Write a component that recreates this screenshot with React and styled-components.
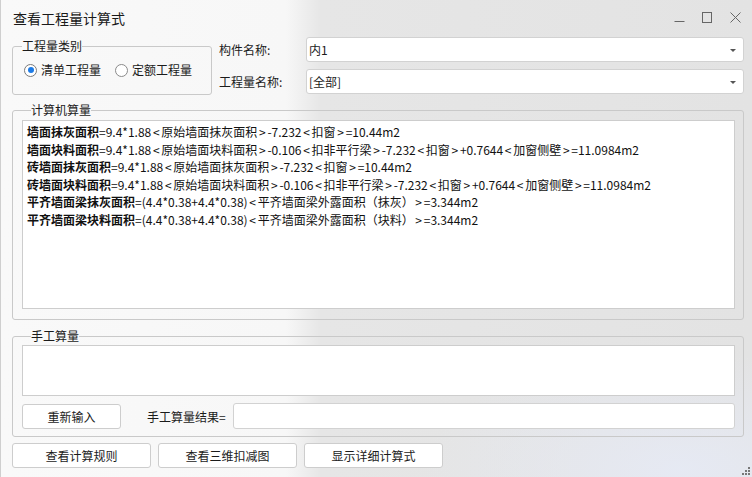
import React from 'react'
import styled, { createGlobalStyle } from 'styled-components'

const GlobalStyle = createGlobalStyle`
  html, body {
    margin: 0;
    padding: 0;
  }
  body {
    font-family: "Noto Sans CJK SC", "Noto Sans", sans-serif;
    font-size: 12px;
    color: #1b1b1b;
  }
`

const lines = [
  { label: '墙面抹灰面积', expr: '=9.4*1.88<原始墙面抹灰面积>-7.232<扣窗>=10.44m2' },
  { label: '墙面块料面积', expr: '=9.4*1.88<原始墙面块料面积>-0.106<扣非平行梁>-7.232<扣窗>+0.7644<加窗侧壁>=11.0984m2' },
  { label: '砖墙面抹灰面积', expr: '=9.4*1.88<原始墙面抹灰面积>-7.232<扣窗>=10.44m2' },
  { label: '砖墙面块料面积', expr: '=9.4*1.88<原始墙面块料面积>-0.106<扣非平行梁>-7.232<扣窗>+0.7644<加窗侧壁>=11.0984m2' },
  { label: '平齐墙面梁抹灰面积', expr: '=(4.4*0.38+4.4*0.38)<平齐墙面梁外露面积（抹灰）>=3.344m2' },
  { label: '平齐墙面梁块料面积', expr: '=(4.4*0.38+4.4*0.38)<平齐墙面梁外露面积（块料）>=3.344m2' },
]

// angle brackets are wider in the original font, give them room
const renderExpr = (expr) =>
  expr.split(/([<>])/).map((part, i) =>
    part === '<' || part === '>' ? <Bracket key={i}>{part}</Bracket> : part
  )

function App() {
  return (
    <>
      <GlobalStyle />
      <Window>
        <TitleBar>
          <Title>查看工程量计算式</Title>
          <Controls>
            <svg width="11" height="11" viewBox="0 0 11 11">
              <path d="M0.5 9.5 H10.5" stroke="#666" strokeWidth="1" />
            </svg>
            <svg width="11" height="11" viewBox="0 0 11 11">
              <rect x="0.5" y="0.5" width="9" height="10" fill="none" stroke="#666" strokeWidth="1" />
            </svg>
            <svg width="11" height="11" viewBox="0 0 11 11">
              <path d="M0.5 0.5 L10.5 10.5 M10.5 0.5 L0.5 10.5" stroke="#666" strokeWidth="1" />
            </svg>
          </Controls>
        </TitleBar>

        <TopRow>
          <TypeGroup>
            <Legend>工程量类别</Legend>
            <RadioRow>
              <RadioItem>
                <Radio checked />
                清单工程量
              </RadioItem>
              <RadioItem>
                <Radio />
                定额工程量
              </RadioItem>
            </RadioRow>
          </TypeGroup>
          <FormArea>
            <FormRow>
              <FieldLabel>构件名称:</FieldLabel>
              <Combo>
                <span>内1</span>
                <Arrow />
              </Combo>
            </FormRow>
            <FormRow>
              <FieldLabel>工程量名称:</FieldLabel>
              <Combo>
                <span>[全部]</span>
                <Arrow />
              </Combo>
            </FormRow>
          </FormArea>
        </TopRow>

        <CalcGroup>
          <Legend>计算机算量</Legend>
          <ResultBox>
            {lines.map((l, i) => (
              <Line key={i}>
                <b>{l.label}</b>
                {renderExpr(l.expr)}
              </Line>
            ))}
          </ResultBox>
        </CalcGroup>

        <ManualGroup>
          <Legend>手工算量</Legend>
          <ManualArea />
          <ManualRow>
            <Button $width={99}>重新输入</Button>
            <ResultLabel>手工算量结果=</ResultLabel>
            <ResultInput />
          </ManualRow>
        </ManualGroup>

        <BottomRow>
          <Button $width={139}>查看计算规则</Button>
          <Button $width={139}>查看三维扣减图</Button>
          <Button $width={139}>显示详细计算式</Button>
        </BottomRow>

        <Grip width="9" height="9" viewBox="0 0 9 9">
          <rect x="6" y="0" width="2" height="2" fill="#777" />
          <rect x="3" y="3" width="2" height="2" fill="#777" />
          <rect x="6" y="3" width="2" height="2" fill="#777" />
          <rect x="0" y="6" width="2" height="2" fill="#777" />
          <rect x="3" y="6" width="2" height="2" fill="#777" />
          <rect x="6" y="6" width="2" height="2" fill="#777" />
        </Grip>
      </Window>
    </>
  )
}

export default App

const Window = styled.div`
position: relative;
width: 752px;
height: 477px;
box-sizing: border-box;
overflow: hidden;
border-left: 1px solid #cfcfcf;
display: flex;
flex-direction: column;
background:
  radial-gradient(ellipse 260px 120px at 680px 470px, rgba(230, 234, 245, 0.9), rgba(230, 234, 245, 0) 100%),
  linear-gradient(to right, #f9f9f9 0px, #f7f7f7 285px, #e6e6e6 320px, #e3e3e3 100%);
`

const TitleBar = styled.div`
height: 37px;
display: flex;
align-items: center;
justify-content: space-between;
padding: 0 11px 0 12px;
box-sizing: border-box;
flex-shrink: 0;
`

const Title = styled.div`
font-size: 14px;
color: #1a1a1a;
margin-top: -1px;
`

const Controls = styled.div`
display: flex;
gap: 17px;
align-items: center;
margin-top: -2px;
`

const TopRow = styled.div`
display: flex;
align-items: flex-start;
padding: 0 8px 0 11px;
`

const Group = styled.fieldset`
margin: 0;
padding: 0;
min-width: 0;
box-sizing: border-box;
border: 1px solid #c9c9c9;
border-radius: 3px;
`

const Legend = styled.legend`
margin-left: 9px;
padding: 0;
font-size: 12px;
line-height: 16px;
color: #1b1b1b;
`

const TypeGroup = styled(Group)`
width: 200px;
height: 57px;
margin-top: 1px;
`

const RadioRow = styled.div`
display: flex;
gap: 14px;
padding: 8px 0 0 11px;
`

const RadioItem = styled.label`
display: flex;
align-items: center;
gap: 4px;
font-size: 12px;
line-height: 16px;
`

const Radio = styled.span`
width: 13px;
height: 13px;
box-sizing: border-box;
border-radius: 50%;
border: 1px solid ${p => (p.checked ? '#7a7a7a' : '#8a8a8a')};
background: #fff;
display: flex;
align-items: center;
justify-content: center;
&::after {
  content: '';
  width: 6px;
  height: 6px;
  border-radius: 50%;
  background: ${p => (p.checked ? '#1d7be6' : 'transparent')};
}
`

const FormArea = styled.div`
flex: 1;
display: flex;
flex-direction: column;
gap: 7px;
margin-left: 7px;
`

const FormRow = styled.div`
display: flex;
align-items: center;
`

const FieldLabel = styled.div`
width: 87px;
font-size: 12px;
`

const Combo = styled.div`
flex: 1;
height: 25px;
box-sizing: border-box;
background: #fff;
border: 1px solid #d2d2d2;
border-radius: 3px;
display: flex;
align-items: center;
justify-content: space-between;
padding: 0 7px 0 2px;
font-size: 12px;
`

const Arrow = styled.span`
width: 0;
height: 0;
border-left: 3px solid transparent;
border-right: 3px solid transparent;
border-top: 3px solid #555;
margin-top: 1px;
`

const CalcGroup = styled(Group)`
margin: 7px 8px 0 11px;
height: 218px;
padding: 2px 8px 10px 9px;
`

const ResultBox = styled.div`
height: 189px;
box-sizing: border-box;
background: #fff;
border: 1px solid #cdcdcd;
padding: 2px 4px;
`

const Line = styled.div`
font-size: 12px;
line-height: 17.5px;
white-space: nowrap;
color: #111;
b {
  font-weight: bold;
}
`

const Bracket = styled.span`
padding: 0 1.7px;
`

const ManualGroup = styled(Group)`
margin: 8px 8px 0 11px;
height: 109px;
padding: 1px 8px 10px 9px;
display: flex;
flex-direction: column;
gap: 7px;
`

const ManualArea = styled.div`
height: 49px;
background: #fff;
border: 1px solid #cdcdcd;
`

const ManualRow = styled.div`
display: flex;
align-items: center;
`

const Button = styled.div`
width: ${p => p.$width}px;
height: 25px;
box-sizing: border-box;
background: #fff;
border: 1px solid #cdcdcd;
border-radius: 3px;
display: flex;
align-items: center;
justify-content: center;
font-size: 12px;
color: #1b1b1b;
flex-shrink: 0;
`

const ResultLabel = styled.div`
margin-left: 26px;
width: 86px;
font-size: 12px;
`

const ResultInput = styled.div`
flex: 1;
height: 26px;
box-sizing: border-box;
background: #fff;
border: 1px solid #d2d2d2;
border-radius: 3px;
`

const BottomRow = styled.div`
display: flex;
gap: 7px;
margin: 6px 0 0 11px;
`

const Grip = styled.svg`
position: absolute;
right: 1px;
bottom: 1px;
`
